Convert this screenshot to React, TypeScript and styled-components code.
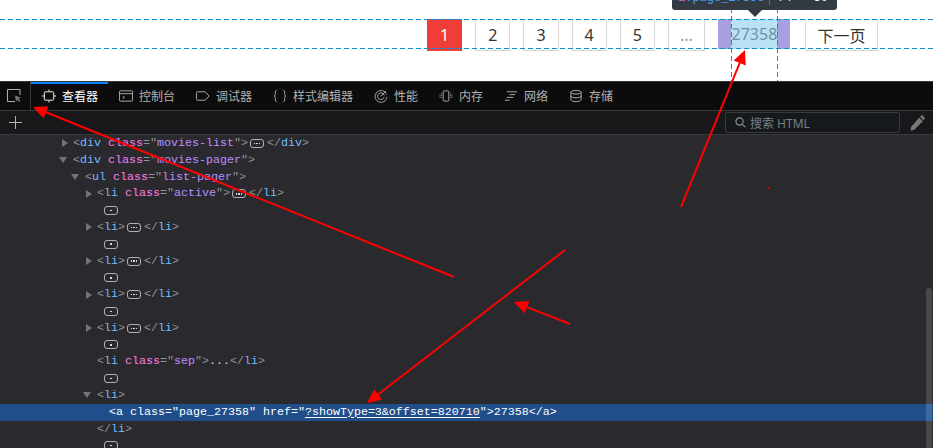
import { ReactNode } from 'react'
import styled, { createGlobalStyle } from 'styled-components'

const GlobalStyle = createGlobalStyle`
    html, body {
        margin: 0;
        padding: 0;
        background: #fff;
        overflow: hidden;
    }
`

const Screen = styled.div`
    position: relative;
    width: 933px;
    height: 448px;
    overflow: hidden;
    display: flex;
    flex-direction: column;
    font-family: 'Noto Sans', 'Noto Sans CJK SC', sans-serif;
`

/* page above the devtools */
const PagePane = styled.div`
    height: 81px;
    flex: none;
    background: #fff;
    box-sizing: border-box;
    padding: 19px 0 0 427px;
`

const Pager = styled.ul`
    display: flex;
    align-items: flex-start;
    gap: 13px;
    margin: 0;
    padding: 0;
    list-style: none;
`

const PageItem = styled.li<{ $active?: boolean; $wide?: boolean }>`
    box-sizing: border-box;
    width: ${(p) => (p.$wide ? '73px' : '35.2px')};
    height: 32px;
    display: flex;
    align-items: center;
    justify-content: center;
    font-size: 16px;
    color: ${(p) => (p.$active ? '#fff' : '#333')};
    background: ${(p) => (p.$active ? '#f03d37' : '#fff')};
    border: 1px solid ${(p) => (p.$active ? '#f03d37' : '#d8d8d8')};
    border-top-color: ${(p) => (p.$active ? '#f03d37' : '#eee')};
`

const DotsItem = styled(PageItem)`
    width: 37px;
    color: #999;
`

const HighlightedItem = styled.li`
    box-sizing: border-box;
    width: 72px;
    height: 30px;
    margin-left: 0.5px;
    margin-right: 1.5px;
    padding: 0 13px;
    background: #a79fdf;
`

const HighlightedContent = styled.div`
    height: 100%;
    display: flex;
    align-items: center;
    justify-content: center;
    background: #b8e2f3;
    color: #6e93a8;
    font-size: 16px;
`

/* inspector highlighter over the page */
const GuideH = styled.div<{ $top: number }>`
    position: absolute;
    left: 0;
    right: 0;
    height: 1px;
    top: ${(p) => p.$top}px;
    background: repeating-linear-gradient(90deg, #0d8fd1 0 5px, transparent 5px 8px);
`

const GuideV = styled.div<{ $left: number }>`
    position: absolute;
    top: 0;
    height: 81px;
    width: 1px;
    left: ${(p) => p.$left}px;
    background: repeating-linear-gradient(180deg, #0d8fd1 0 5px, transparent 5px 8px);
`

const Infobar = styled.div`
    position: absolute;
    left: 672px;
    top: -9px;
    width: 165px;
    height: 19px;
    box-sizing: border-box;
    display: flex;
    align-items: center;
    padding: 0 6px 5px;
    gap: 7px;
    background: #343a42;
    border-radius: 3px;
    font-family: 'Liberation Mono', monospace;
    font-size: 12px;
    color: #fff;

    &::after {
        content: '';
        position: absolute;
        left: 76px;
        top: 19px;
        border: 7px solid transparent;
        border-top-color: #343a42;
        border-bottom: 0;
    }
`

const InfobarTag = styled.span`
    color: #45a1ff;
    padding-right: 5px;
    border-right: 1px solid #6a6f75;
`

const InfobarElement = styled.span`
    color: #d96ff0;
`

/* devtools chrome */
const TabBar = styled.div`
    height: 30px;
    flex: none;
    box-sizing: border-box;
    display: flex;
    background: #0c0c0d;
    border-top: 1px solid #38383d;
    border-bottom: 1px solid #38383d;
`

const PickerButton = styled.div`
    width: 31px;
    height: 100%;
    box-sizing: border-box;
    padding-left: 7px;
    display: flex;
    align-items: center;
    flex: none;
    color: #b1b1b3;
    border-right: 1px solid #38383d;
`

const Tab = styled.div<{ $active?: boolean }>`
    box-sizing: border-box;
    height: 100%;
    padding: 0 10px 2px 11px;
    display: flex;
    align-items: center;
    gap: 6px;
    font-size: 12px;
    color: ${(p) => (p.$active ? '#fff' : '#b1b1b3')};
    border-top: 2px solid ${(p) => (p.$active ? '#0a84ff' : 'transparent')};
`

const TabIcon = styled.svg`
    width: 14px;
    height: 14px;
    flex: none;
    fill: none;
    stroke: currentColor;
    stroke-width: 1;
`

const SubBar = styled.div`
    height: 24px;
    flex: none;
    box-sizing: border-box;
    display: flex;
    align-items: center;
    justify-content: space-between;
    padding: 0 8px 0 9px;
    background: #18181a;
    border-bottom: 1px solid #38383d;
    color: #b1b1b3;
`

const SearchArea = styled.div`
    display: flex;
    align-items: center;
    gap: 10px;
`

const SearchBox = styled.div`
    box-sizing: border-box;
    width: 175px;
    height: 21px;
    padding-left: 9px;
    display: flex;
    align-items: center;
    gap: 4px;
    background: #16191b;
    border: 1px solid #38383d;
    border-radius: 2px;
    font-size: 12px;
    color: #75808a;
`

/* markup tree */
const Tree = styled.div`
    flex: 1;
    background: #2a2a2e;
    font-family: 'Liberation Mono', monospace;
    font-size: 11.67px;
    color: #939395;
`

const Row = styled.div<{ $depth: number; $selected?: boolean }>`
    height: 16.8px;
    box-sizing: border-box;
    padding-left: ${(p) => 61 + p.$depth * 12}px;
    display: flex;
    align-items: center;
    background: ${(p) => (p.$selected ? '#204e8a' : 'transparent')};
    color: ${(p) => (p.$selected ? '#fff' : '#939395')};
`

const Markup = styled.span`
    display: block;
    line-height: 16.8px;
    white-space: pre;
`

const Twisty = styled.span<{ $state?: 'open' | 'closed' }>`
    width: 12px;
    flex: none;
    display: flex;
    justify-content: flex-start;
    padding-left: 1px;
    box-sizing: border-box;

    &::before {
        content: '';
        display: ${(p) => (p.$state ? 'block' : 'none')};
        border-style: solid;
        border-color: transparent;
        ${(p) =>
            p.$state === 'open'
                ? `border-width: 6px 4.5px 0 4.5px; border-top-color: #737378; margin-left: -3px;`
                : `border-width: 4.5px 0 4.5px 6px; border-left-color: #737378;`}
    }
`

const TagName = styled.span<{ $plain?: boolean }>`
    color: ${(p) => (p.$plain ? '#fff' : '#75bfff')};
`

const AttrName = styled.span<{ $plain?: boolean }>`
    color: ${(p) => (p.$plain ? '#fff' : '#ff7de9')};
`

const AttrValue = styled.span<{ $plain?: boolean }>`
    color: ${(p) => (p.$plain ? '#fff' : '#b98eff')};
`

const LinkValue = styled.span`
    color: #fff;
    text-decoration: underline;
    text-underline-offset: 2px;
`

const PlainText = styled.span`
    color: #d7d7db;
`

const Badge = styled.span`
    box-sizing: border-box;
    width: 14px;
    height: 9px;
    margin: 4px 3px 0 2px;
    display: inline-flex;
    align-items: center;
    justify-content: center;
    gap: 1px;
    vertical-align: top;
    border: 1px solid #b1b1b3;
    border-radius: 3px;
`

const BadgeDot = styled.i`
    width: 1.5px;
    height: 1.5px;
    background: #d7d7db;
`

const WhitespaceBadge = styled(Badge)`
    margin: 0 0 0 7px;
`

const Scrollbar = styled.div`
    position: absolute;
    left: 926px;
    top: 288px;
    bottom: 0;
    width: 6px;
    border-radius: 3px 3px 0 0;
    background: rgba(255, 255, 255, 0.14);
`

const AnnotationLayer = styled.svg`
    position: absolute;
    left: 0;
    top: 0;
    width: 933px;
    height: 448px;
    pointer-events: none;
`

function Ellipsis() {
    return (
        <Badge>
            <BadgeDot />
            <BadgeDot />
            <BadgeDot />
        </Badge>
    )
}

function Open({ name, cls }: { name: string; cls?: string }) {
    return (
        <>
            {'<'}
            <TagName>{name}</TagName>
            {cls && (
                <>
                    {' '}
                    <AttrName>class</AttrName>
                    {'="'}
                    <AttrValue>{cls}</AttrValue>
                    {'"'}
                </>
            )}
            {'>'}
        </>
    )
}

function Close({ name }: { name: string }) {
    return (
        <>
            {'</'}
            <TagName>{name}</TagName>
            {'>'}
        </>
    )
}

function CollapsedLi({ cls }: { cls?: string }) {
    return (
        <Row $depth={2}>
            <Twisty $state="closed" />
            <Markup>
                <Open name="li" cls={cls} />
                <Ellipsis />
                <Close name="li" />
            </Markup>
        </Row>
    )
}

function WhitespaceRow() {
    return (
        <Row $depth={2}>
            <Twisty />
            <WhitespaceBadge>
                <BadgeDot />
            </WhitespaceBadge>
        </Row>
    )
}

function Arrow({ x1, y1, x2, y2 }: { x1: number; y1: number; x2: number; y2: number }) {
    const len = Math.hypot(x2 - x1, y2 - y1)
    const ux = (x2 - x1) / len
    const uy = (y2 - y1) / len
    const bx = x2 - ux * 14
    const by = y2 - uy * 14
    const nx = -uy * 6.5
    const ny = ux * 6.5
    return (
        <>
            <line x1={x1} y1={y1} x2={bx} y2={by} stroke="#f00" strokeWidth={2} />
            <polygon
                points={`${x2},${y2} ${bx + nx},${by + ny} ${bx - nx},${by - ny}`}
                fill="#f00"
            />
        </>
    )
}

function TabItem({ label, active, icon }: { label: string; active?: boolean; icon: ReactNode }) {
    return (
        <Tab $active={active}>
            <TabIcon viewBox="0 0 15 14">{icon}</TabIcon>
            {label}
        </Tab>
    )
}

export default function App() {
    return (
        <Screen>
            <GlobalStyle />
            <PagePane>
                <Pager>
                    <PageItem $active>1</PageItem>
                    <PageItem>2</PageItem>
                    <PageItem>3</PageItem>
                    <PageItem>4</PageItem>
                    <PageItem>5</PageItem>
                    <DotsItem>...</DotsItem>
                    <HighlightedItem>
                        <HighlightedContent>27358</HighlightedContent>
                    </HighlightedItem>
                    <PageItem $wide>下一页</PageItem>
                </Pager>
            </PagePane>

            <TabBar>
                <PickerButton>
                    <svg width="15" height="14" viewBox="0 0 15 14" fill="none" stroke="currentColor">
                        <path d="M8 12.5H.5V.5h12.5V6" />
                        <path d="M8 6.5l6 2.2-2.4 1 1.8 2.4-1.2 1-1.8-2.4-1.4 1.8z" fill="#77777a" stroke="none" />
                    </svg>
                </PickerButton>
                <TabItem
                    active
                    label="查看器"
                    icon={
                        <>
                            <rect x="2.5" y="2.5" width="10" height="9" rx="1" />
                            <path d="M7.5 0v2M7.5 12v2M0 7h2M13 7h2" />
                        </>
                    }
                />
                <TabItem
                    label="控制台"
                    icon={
                        <>
                            <rect x="0.5" y="1.5" width="14" height="11" rx="1" />
                            <path d="M.5 4.5h14M4 7l2 1.5L4 10" />
                        </>
                    }
                />
                <TabItem
                    label="调试器"
                    icon={<path d="M1.5 2.5h8.5l4 4.5-4 4.500H1.500a1 1 0 0 1-1-1v-7a1 1 0 0 1 1-1z" />}
                />
                <TabItem
                    label="样式编辑器"
                    icon={
                        <>
                            <path d="M4 1C2.500 1 2.500 2 2.500 4S2.500 6.500 1 7c1.500.5 1.500 1 1.500 3s0 3 1.500 3" />
                            <path d="M11 1c1.500 0 1.500 1 1.500 3s0 2.500 1.500 3c-1.500.5-1.500 1-1.500 3s0 3-1.500 3" />
                        </>
                    }
                />
                <TabItem
                    label="性能"
                    icon={
                        <>
                            <path d="M13.500 5.500A6.300 6.300 0 1 0 13.800 8" />
                            <path d="M11 6.500A3.600 3.600 0 1 0 11 8" />
                            <path d="M7 7.500L13 1.500" />
                        </>
                    }
                />
                <TabItem
                    label="内存"
                    icon={
                        <>
                            <rect x="4.500" y="1.500" width="6" height="11" rx="1" />
                            <path d="M2.500 4v6M1 5.500v3M12.500 4v6M14 5.500v3" strokeDasharray="1 1" />
                        </>
                    }
                />
                <TabItem
                    label="网络"
                    icon={<path d="M3 2.500h11M6 5.500h6M3 8.500h7M1 11.500h5" />}
                />
                <TabItem
                    label="存储"
                    icon={
                        <>
                            <ellipse cx="7.500" cy="3" rx="5.500" ry="2" />
                            <path d="M2 3v8c0 1.100 2.500 2 5.500 2s5.500-.9 5.500-2V3M2 7c0 1.100 2.500 2 5.500 2S13 8.100 13 7" />
                        </>
                    }
                />
            </TabBar>

            <SubBar>
                <svg width="13" height="13" viewBox="0 0 13 13" stroke="currentColor">
                    <path d="M6.500 0v13M0 6.500h13" />
                </svg>
                <SearchArea>
                    <SearchBox>
                        <svg width="11" height="11" viewBox="0 0 11 11" fill="none" stroke="#8f8f93" strokeWidth="1.200">
                            <circle cx="4.500" cy="4.500" r="3.600" />
                            <path d="M7.200 7.200l3 3" />
                        </svg>
                        搜索 HTML
                    </SearchBox>
                    <svg width="15" height="16" viewBox="0 0 15 16" fill="#77777a">
                        <path d="M9 2.500l4 4-1.500 1L4 15l-3.500.5L1 12l7-8z" />
                        <path d="M10 1.500l2-1.500 3 3-1.500 2.500z" />
                    </svg>
                </SearchArea>
            </SubBar>

            <Tree>
                <Row $depth={0}>
                    <Twisty $state="closed" />
                    <Markup>
                        <Open name="div" cls="movies-list" />
                        <Ellipsis />
                        <Close name="div" />
                    </Markup>
                </Row>
                <Row $depth={0}>
                    <Twisty $state="open" />
                    <Markup>
                        <Open name="div" cls="movies-pager" />
                    </Markup>
                </Row>
                <Row $depth={1}>
                    <Twisty $state="open" />
                    <Markup>
                        <Open name="ul" cls="list-pager" />
                    </Markup>
                </Row>
                <CollapsedLi cls="active" />
                <WhitespaceRow />
                <CollapsedLi />
                <WhitespaceRow />
                <CollapsedLi />
                <WhitespaceRow />
                <CollapsedLi />
                <WhitespaceRow />
                <CollapsedLi />
                <WhitespaceRow />
                <Row $depth={2}>
                    <Twisty />
                    <Markup>
                        <Open name="li" cls="sep" />
                        <PlainText>...</PlainText>
                        <Close name="li" />
                    </Markup>
                </Row>
                <WhitespaceRow />
                <Row $depth={2}>
                    <Twisty $state="open" />
                    <Markup>
                        <Open name="li" />
                    </Markup>
                </Row>
                <Row $depth={3} $selected>
                    <Twisty />
                    <Markup>
                        {'<'}
                        <TagName $plain>a</TagName>{' '}
                        <AttrName $plain>class</AttrName>
                        {'="'}
                        <AttrValue $plain>page_27358</AttrValue>
                        {'" '}
                        <AttrName $plain>href</AttrName>
                        {'="'}
                        <LinkValue>?showType=3&amp;offset=820710</LinkValue>
                        {'">27358</'}
                        <TagName $plain>a</TagName>
                        {'>'}
                    </Markup>
                </Row>
                <Row $depth={2}>
                    <Twisty />
                    <Markup>
                        <Close name="li" />
                    </Markup>
                </Row>
                <WhitespaceRow />
            </Tree>

            <GuideH $top={19} />
            <GuideH $top={48} />
            <GuideV $left={731} />
            <GuideV $left={777} />
            <Infobar>
                <InfobarTag>
                    <InfobarElement>a</InfobarElement>.page_27358
                </InfobarTag>
                74 × 30
            </Infobar>
            <Scrollbar />

            <AnnotationLayer viewBox="0 0 933 448">
                <Arrow x1={454} y1={277} x2={33} y2={107} />
                <Arrow x1={681} y1={207} x2={745} y2={50} />
                <Arrow x1={565} y1={250} x2={367} y2={403} />
                <Arrow x1={570} y1={324} x2={514} y2={302} />
                <rect x="768" y="187" width="1.500" height="1.500" fill="#f00" />
            </AnnotationLayer>
        </Screen>
    )
}
